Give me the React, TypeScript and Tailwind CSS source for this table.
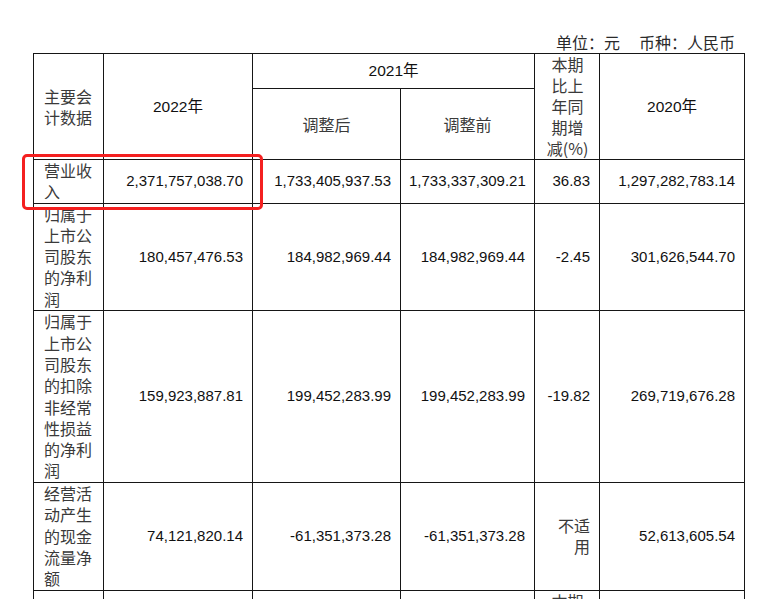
import React from 'react';

const cjk = "font-['Noto_Sans_CJK_SC',sans-serif]";
const num = "font-['Liberation_Sans','Noto_Sans_CJK_SC',sans-serif]";

type Row = { label: string; h: string; values: string[] };

const rows: Row[] = [
  { label: '营业收入', h: 'h-[43px]', values: ['2,371,757,038.70', '1,733,405,937.53', '1,733,337,309.21', '36.83', '1,297,282,783.14'] },
  { label: '归属于上市公司股东的净利润', h: 'h-[106px]', values: ['180,457,476.53', '184,982,969.44', '184,982,969.44', '-2.45', '301,626,544.70'] },
  { label: '归属于上市公司股东的扣除非经常性损益的净利润', h: 'h-[172px]', values: ['159,923,887.81', '199,452,283.99', '199,452,283.99', '-19.82', '269,719,676.28'] },
  { label: '经营活动产生的现金流量净额', h: 'h-[107px]', values: ['74,121,820.14', '-61,351,373.28', '-61,351,373.28', '不适用', '52,613,605.54'] },
];

const cell = 'border border-[#161616] p-0 align-middle';

export default function App() {
  return (
    <div className="relative w-[779px] h-[613px] bg-white overflow-hidden">
      <div className={`flex justify-end gap-[19px] h-[53px] pt-[32px] pr-[44px] text-[16px] leading-[21px] text-[#2a2a2a] ${cjk}`}>
        <span>单位：元</span>
        <span>币种：人民币</span>
      </div>

      <div className="ml-[33px] h-[546px] overflow-hidden">
        <table className="table-fixed border-collapse w-[711px]">
          <colgroup>
            <col className="w-[70px]" />
            <col className="w-[149px]" />
            <col className="w-[148px]" />
            <col className="w-[134px]" />
            <col className="w-[65px]" />
            <col className="w-[145px]" />
          </colgroup>
          <thead>
            <tr className="h-[34px]">
              <td rowSpan={2} className={`${cell} pl-[10px] pr-[8px] text-left text-[16px] leading-[21px] text-[#3a3a3a] ${cjk}`}>主要会计数据</td>
              <td rowSpan={2} className={`${cell} text-center text-[15.5px] text-[#111] ${num}`}>2022年</td>
              <td colSpan={2} className={`${cell} text-center text-[15.5px] text-[#111] ${num}`}>2021年</td>
              <td rowSpan={2} className={`${cell} pl-[9px] pr-[8px] text-center text-[16px] leading-[21px] text-[#3a3a3a] ${cjk}`}>本期比上年同期增减(%)</td>
              <td rowSpan={2} className={`${cell} text-center text-[15.5px] text-[#111] ${num}`}>2020年</td>
            </tr>
            <tr className="h-[70px]">
              <td className={`${cell} text-center text-[16px] text-[#3a3a3a] ${cjk}`}>调整后</td>
              <td className={`${cell} text-center text-[16px] text-[#3a3a3a] ${cjk}`}>调整前</td>
            </tr>
          </thead>
          <tbody>
            {rows.map((r) => (
              <tr key={r.label} className={r.h}>
                <td className={`${cell} pl-[10px] pr-[8px] text-left text-[16px] leading-[21.3px] text-[#3a3a3a] ${cjk}`}>{r.label}</td>
                {r.values.map((v, i) => (
                  <td
                    key={i}
                    className={`${cell} pl-[8px] pr-[9px] text-right ${
                      v === '不适用'
                        ? `text-[16px] leading-[21px] text-[#3a3a3a] ${cjk}`
                        : `text-[15px] text-[#111] ${num}`
                    }`}
                  >
                    {v}
                  </td>
                ))}
              </tr>
            ))}
            <tr className="h-[130px]">
              <td className={cell} />
              <td className={cell} />
              <td className={cell} />
              <td className={cell} />
              <td className={`${cell} !align-top pl-[9px] pr-[8px] text-center text-[16px] leading-[21px] text-[#3a3a3a] ${cjk}`}>本期末比上年末增减(%)</td>
              <td className={cell} />
            </tr>
          </tbody>
        </table>
      </div>

      <div className="absolute left-[22px] top-[154px] w-[241px] h-[56px] border-[3px] border-[#f42020] rounded-[5px]" />
    </div>
  );
}
